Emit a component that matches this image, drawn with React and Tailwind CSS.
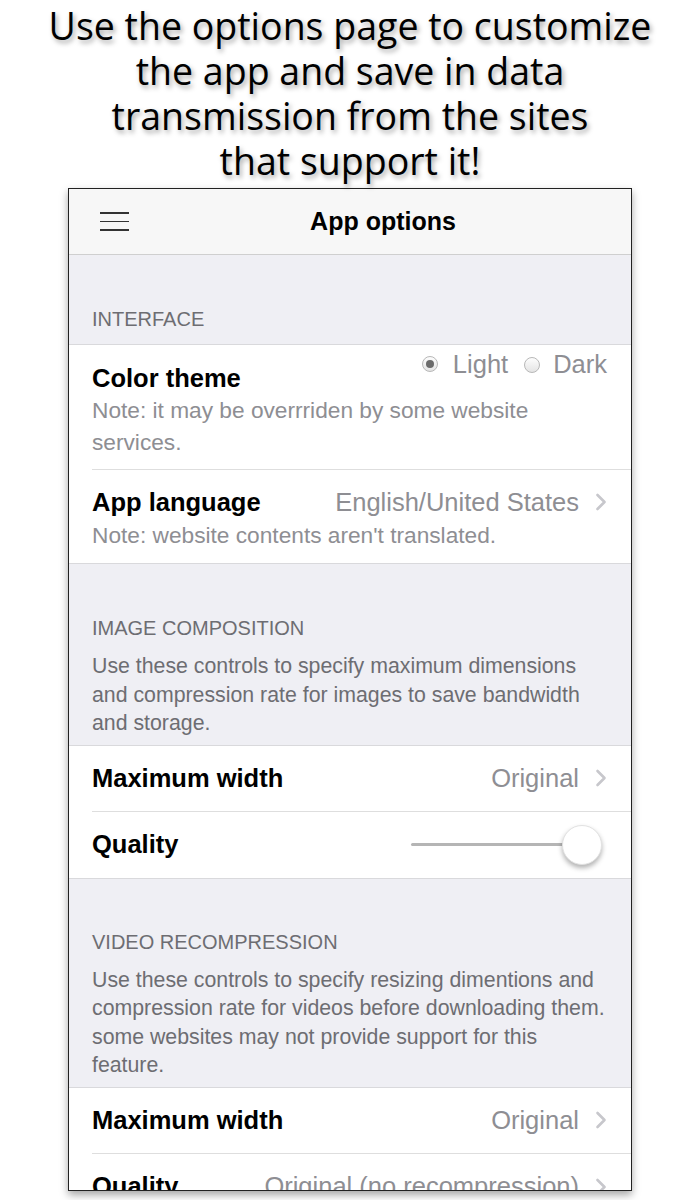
const sans = { fontFamily: '"Liberation Sans", Arial, sans-serif' };

function Chevron() {
  return (
    <svg width="12" height="18" viewBox="0 0 12 18" className="ml-[16px] shrink-0">
      <path d="M2.5 2 L9.5 9 L2.5 16" fill="none" stroke="#c7c7cc" strokeWidth="2.6" strokeLinecap="round" strokeLinejoin="round" />
    </svg>
  );
}

function Radio({ checked }) {
  return (
    <span className="inline-flex w-[16px] h-[16px] rounded-full border border-[#b8b8b8] bg-gradient-to-b from-[#fdfdfd] to-[#e4e4e4] items-center justify-center shrink-0">
      {checked && <span className="w-[8px] h-[8px] rounded-full bg-[#6b6b6b]" />}
    </span>
  );
}

function SectionHead({ title, children, pt }) {
  return (
    <div className={`bg-[#efeff4] px-[23px] border-b border-[#d9d9dc] ${pt}`}>
      <div className="text-[20px] leading-[24px] text-[#6d6d72]">{title}</div>
      {children && (
        <div className="mt-[12px] pb-[7px] text-[21.3px] leading-[28.5px] text-[#6d6d72]">{children}</div>
      )}
    </div>
  );
}

function ValueRow({ label, value, last }) {
  return (
    <div className={`ml-[23px] pr-[24px] h-[66px] flex items-center justify-between ${last ? '' : 'border-b border-[#dedede]'}`}>
      <span className="text-[25.5px] font-bold text-black">{label}</span>
      <span className="flex items-center text-[25.5px] text-[#8e8e93]">
        {value}
        <Chevron />
      </span>
    </div>
  );
}

export default function App() {
  return (
    <div className="w-[700px] h-[1200px] bg-white overflow-hidden" style={sans}>
      <div
        className="pt-[3px] text-center text-[37.5px] leading-[45px] text-black [text-shadow:2px_3px_5px_rgba(0,0,0,0.35)]"
        style={{ fontFamily: '"Open Sans", "Noto Sans", sans-serif' }}
      >
        Use the options page to customize<br />
        the app and save in data<br />
        transmission from the sites<br />
        that support it!
      </div>

      <div className="mt-[5px] ml-[68px] w-[564px] h-[1003px] border border-[#222] overflow-hidden bg-white shadow-[0_4px_8px_rgba(0,0,0,0.35)]">
        {/* header */}
        <div className="h-[66px] bg-[#f7f7f7] border-b border-[#cfcfcf] flex items-center">
          <div className="ml-[31px] w-[29px] flex flex-col gap-[7px]">
            <span className="h-[1.5px] bg-[#333]" />
            <span className="h-[1.5px] bg-[#333]" />
            <span className="h-[1.5px] bg-[#333]" />
          </div>
          <div className="flex-1 text-center pl-[6px] text-[25px] font-bold text-black">App options</div>
        </div>

        <SectionHead title="INTERFACE" pt="pt-[52px] pb-[13px]" />

        <div className="bg-white border-b border-[#d9d9dc]">
          <div className="ml-[23px] pr-[24px] pt-[5px] pb-[11px] border-b border-[#dedede]">
            <div className="flex justify-between items-start">
              <span className="mt-[14px] text-[25.5px] leading-[28px] font-bold text-black">Color theme</span>
              <span className="flex items-center h-[28px] text-[25.5px] text-[#8e8e93]">
                <Radio checked />
                <span className="ml-[15px]">Light</span>
                <span className="ml-[16px]"><Radio /></span>
                <span className="ml-[13px]">Dark</span>
              </span>
            </div>
            <div className="mt-[2px] text-[22.7px] leading-[32px] text-[#8e8e93]">
              Note: it may be overrriden by some website services.
            </div>
          </div>
          <div className="ml-[23px] pr-[24px] pt-[18px] pb-[12px]">
            <div className="flex justify-between items-center h-[28px]">
              <span className="text-[25.5px] font-bold text-black">App language</span>
              <span className="flex items-center text-[25.5px] text-[#8e8e93]">
                English/United States
                <Chevron />
              </span>
            </div>
            <div className="mt-[3px] text-[22.7px] leading-[32px] text-[#8e8e93]">
              Note: website contents aren't translated.
            </div>
          </div>
        </div>

        <SectionHead title="IMAGE COMPOSITION" pt="pt-[52px]">
          Use these controls to specify maximum dimensions and compression rate for images to save bandwidth and storage.
        </SectionHead>

        <div className="bg-white border-b border-[#d9d9dc]">
          <ValueRow label="Maximum width" value="Original" />
          <div className="ml-[23px] pr-[29px] h-[66px] flex items-center justify-between">
            <span className="text-[25.5px] font-bold text-black">Quality</span>
            <div className="flex items-center">
              <div className="w-[155px] h-[3px] bg-[#b5b5b5] rounded-full" />
              <div className="-ml-[4px] w-[40px] h-[40px] rounded-full bg-white border border-[#e2e2e2] shadow-[0_3px_5px_rgba(0,0,0,0.3)]" />
            </div>
          </div>
        </div>

        <SectionHead title="VIDEO RECOMPRESSION" pt="pt-[51px]">
          Use these controls to specify resizing dimentions and compression rate for videos before downloading them. some websites may not provide support for this<br />
          feature.
        </SectionHead>

        <div className="bg-white">
          <ValueRow label="Maximum width" value="Original" />
          <ValueRow label="Quality" value="Original (no recompression)" last />
        </div>
      </div>
    </div>
  );
}
